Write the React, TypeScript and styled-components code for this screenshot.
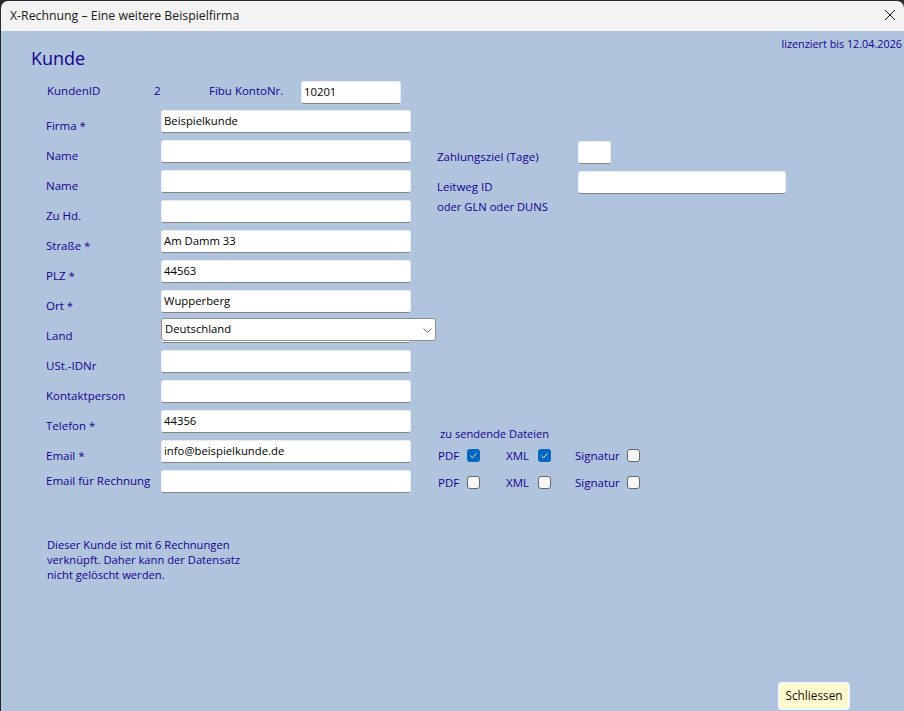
import React from "react";
import styled, { createGlobalStyle } from "styled-components";

const Global = createGlobalStyle`
  html, body { margin: 0; padding: 0; background: #2b2b2b; }
  * { box-sizing: border-box; }
  body { font-family: "Open Sans", "Noto Sans", sans-serif; font-size: 11.5px; }
`;

const ink = "#180090";

const Window = styled.div`
  width: 904px;
  height: 711px;
  display: flex;
  flex-direction: column;
  padding: 1px 0 0 1px;
  overflow: hidden;
`;
const TitleBar = styled.header`
  height: 30px;
  flex: none;
  background: #f3f3f3;
  border-top-left-radius: 7px;
  border-top-right-radius: 7px;
  display: flex;
  align-items: center;
  justify-content: space-between;
  padding: 0 9px 2px 9px;
  color: #1a1a1a;
  font-size: 12.3px;
`;
const CloseBtn = styled.button`
  border: 0;
  background: none;
  padding: 0;
  width: 10px;
  height: 10px;
  display: block;
  color: #111;
  svg { display: block; }
`;
const Content = styled.main`
  flex: 1;
  background: #b0c4de;
  display: flex;
  flex-direction: column;
  color: ${ink};
  min-height: 0;
`;
const TopBar = styled.div`
  display: flex;
  justify-content: space-between;
  align-items: flex-start;
  height: 47px;
  padding: 5px 2px 0 30px;
`;
const Heading = styled.h1`
  margin: 10px 0 0;
  font-size: 18px;
  line-height: 24px;
  font-weight: 400;
`;
const License = styled.div`
  font-size: 10.8px;
  line-height: 16px;
`;
const IdRow = styled.div`
  display: flex;
  align-items: flex-start;
  height: 32px;
  padding: 3px 0 0 46px;
`;
const IdLabel = styled.span`
  width: 107px;
  margin-top: 2px;
  line-height: 16px;
`;
const IdValue = styled.span`
  width: 55px;
  margin-top: 2px;
  line-height: 16px;
`;
const FibuLabel = styled.span`
  width: 92px;
  margin-top: 2px;
  line-height: 16px;
`;
const Columns = styled.div`
  display: flex;
  align-items: flex-start;
  padding-left: 45px;
`;
const LeftColumn = styled.div`
  width: 391px;
  display: flex;
  flex-direction: column;
`;
const Row = styled.div`
  position: relative;
  height: 30px;
  display: grid;
  grid-template-columns: 115px 250px;
  align-items: start;
`;
const RowLabel = styled.label<{ $tight?: boolean }>`
  margin-top: ${(p) => (p.$tight ? 3 : 8)}px;
  line-height: 16px;
  white-space: nowrap;
`;
const TextInput = styled.input<{ $w?: number }>`
  width: ${(p) => p.$w ?? 250}px;
  height: 23px;
  display: block;
  padding: 0 2px 3px;
  font: inherit;
  font-size: 11.3px;
  color: #000;
  background: #fff;
  border: 1px solid #e9edf3;
  border-bottom: 1px solid #858585;
  border-radius: 3px;
  outline: 0;
`;
const SelectBox = styled.div`
  position: absolute;
  left: 115px;
  top: -2px;
  width: 275px;
  height: 23px;
  svg { position: absolute; right: 4px; top: 10px; }
`;
const NativeSelect = styled.select`
  appearance: none;
  width: 100%;
  height: 100%;
  display: block;
  padding: 0 3px 3px;
  font: inherit;
  font-size: 11.3px;
  color: #000;
  background: #fff;
  border: 1px solid #8f8f8f;
  border-radius: 3px;
  outline: 0;
`;
const RightColumn = styled.div`
  width: 400px;
  display: flex;
  flex-direction: column;
  padding-top: 31px;
`;
const SideRow = styled.div`
  height: 30px;
  display: grid;
  grid-template-columns: 141px auto;
  justify-content: start;
  align-items: start;
`;
const SideLabel = styled.label`
  margin-top: 8px;
  line-height: 16px;
  white-space: nowrap;
`;
const SideHint = styled.div`
  margin-top: -2px;
  font-size: 11.2px;
  line-height: 16px;
`;
const FilesTitle = styled.div`
  margin: 211px 0 0 3px;
  font-size: 11.1px;
  line-height: 16px;
`;
const CheckRow = styled.div`
  display: grid;
  grid-template-columns: 68px 69px 65px;
  height: 27px;
  padding-left: 1px;
  align-items: center;
  &:first-of-type { margin-top: 5px; }
`;
const CheckItem = styled.label<{ $w: number }>`
  display: flex;
  align-items: center;
  justify-content: space-between;
  width: ${(p) => p.$w}px;
  line-height: 16px;
`;
const CheckBox = styled.input`
  appearance: none;
  width: 13px;
  height: 13px;
  margin: 0;
  border: 1px solid #666;
  border-radius: 3px;
  background: #f6f6f6;
`;
const CheckedBox = styled.span`
  width: 13px;
  height: 13px;
  border-radius: 3px;
  background: #0067c0;
  display: flex;
  align-items: center;
  justify-content: center;
`;
const Note = styled.p`
  margin: 37px 0 0 46px;
  width: 200px;
  font-size: 11.2px;
  line-height: 15px;
`;
const Footer = styled.footer`
  margin-top: auto;
  display: flex;
  justify-content: flex-end;
  padding: 0 54px 1px 0;
`;
const CloseButton = styled.button`
  width: 72px;
  height: 28px;
  font: inherit;
  font-size: 11.8px;
  color: #111;
  background: #fffacd;
  border: 2px solid #f4f6f9;
  border-radius: 4px;
  padding: 0 0 2px;
`;

const Check = ({ checked }: { checked?: boolean }) =>
  checked ? (
    <CheckedBox>
      <svg width="9" height="9" viewBox="0 0 9 9" fill="none">
        <path d="M1.5 4.8 L3.6 6.8 L7.6 2.2" stroke="#dfeeff" strokeWidth="1" />
      </svg>
    </CheckedBox>
  ) : (
    <CheckBox type="checkbox" readOnly />
  );

const fields: { label: string; value?: string; tight?: boolean }[] = [
  { label: "Firma *", value: "Beispielkunde" },
  { label: "Name" },
  { label: "Name" },
  { label: "Zu Hd." },
  { label: "Straße *", value: "Am Damm 33" },
  { label: "PLZ *", value: "44563" },
  { label: "Ort *", value: "Wupperberg" },
];
const fields2: { label: string; value?: string; tight?: boolean }[] = [
  { label: "USt.-IDNr" },
  { label: "Kontaktperson" },
  { label: "Telefon *", value: "44356" },
  { label: "Email *", value: "info@beispielkunde.de" },
  { label: "Email für Rechnung", tight: true },
];

const Field = ({ label, value, tight }: { label: string; value?: string; tight?: boolean }) => (
  <Row>
    <RowLabel $tight={tight}>{label}</RowLabel>
    <TextInput readOnly value={value ?? ""} />
  </Row>
);

const CheckLine = ({ a, b, c }: { a?: boolean; b?: boolean; c?: boolean }) => (
  <CheckRow>
    <CheckItem $w={42}>PDF <Check checked={a} /></CheckItem>
    <CheckItem $w={45}>XML <Check checked={b} /></CheckItem>
    <CheckItem $w={65}>Signatur <Check checked={c} /></CheckItem>
  </CheckRow>
);

export default function App() {
  return (
    <Window>
      <Global />
      <TitleBar>
        <span>X-Rechnung – Eine weitere Beispielfirma</span>
        <CloseBtn aria-label="Schließen">
          <svg width="10" height="10" viewBox="0 0 10 10" fill="none">
            <path d="M0 0 L10 10 M10 0 L0 10" stroke="currentColor" strokeWidth="1" />
          </svg>
        </CloseBtn>
      </TitleBar>
      <Content>
        <TopBar>
          <Heading>Kunde</Heading>
          <License>lizenziert bis 12.04.2026</License>
        </TopBar>
        <IdRow>
          <IdLabel>KundenID</IdLabel>
          <IdValue>2</IdValue>
          <FibuLabel>Fibu KontoNr.</FibuLabel>
          <TextInput $w={100} readOnly value="10201" />
        </IdRow>
        <Columns>
          <LeftColumn>
            {fields.map((f, i) => (
              <Field key={i} {...f} />
            ))}
            <Row>
              <RowLabel>Land</RowLabel>
              <TextInput readOnly value="" />
              <SelectBox>
                <NativeSelect defaultValue="Deutschland">
                  <option>Deutschland</option>
                </NativeSelect>
                <svg width="9" height="5" viewBox="0 0 9 5" fill="none">
                  <path d="M0.5 0.5 L4.5 4.5 L8.5 0.5" stroke="#666" strokeWidth="1" />
                </svg>
              </SelectBox>
            </Row>
            {fields2.map((f, i) => (
              <Field key={i} {...f} />
            ))}
          </LeftColumn>
          <RightColumn>
            <SideRow>
              <SideLabel>Zahlungsziel (Tage)</SideLabel>
              <TextInput $w={33} readOnly value="" />
            </SideRow>
            <SideRow>
              <SideLabel>Leitweg ID</SideLabel>
              <TextInput $w={208} readOnly value="" />
            </SideRow>
            <SideHint>oder GLN oder DUNS</SideHint>
            <FilesTitle>zu sendende Dateien</FilesTitle>
            <CheckLine a b />
            <CheckLine />
          </RightColumn>
        </Columns>
        <Note>
          Dieser Kunde ist mit 6 Rechnungen verknüpft. Daher kann der Datensatz nicht gelöscht werden.
        </Note>
        <Footer>
          <CloseButton>Schliessen</CloseButton>
        </Footer>
      </Content>
    </Window>
  );
}
